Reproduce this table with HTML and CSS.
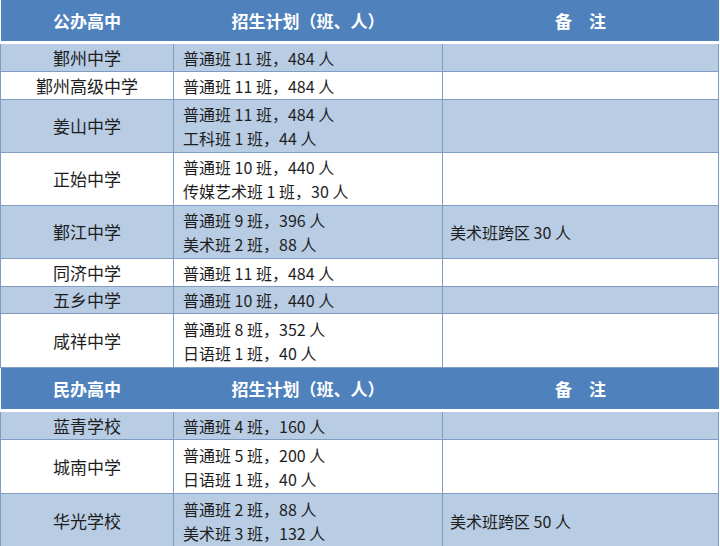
FILE: index.html
```html
<!DOCTYPE html>
<html lang="zh">
<head>
<meta charset="utf-8">
<link rel="stylesheet" href="styles.css">
</head>
<body>
<table class="plan">
  <colgroup>
    <col class="c1"><col class="c2"><col class="c3">
  </colgroup>
  <tbody>
    <tr class="head">
      <th>公办高中</th><th>招生计划（班、人）</th><th>备&#12288;注</th>
    </tr>
    <tr class="r1 alt"><td class="name">鄞州中学</td><td class="plan-c">普通班 11 班，484 人</td><td class="note"></td></tr>
    <tr class="r1"><td class="name">鄞州高级中学</td><td class="plan-c">普通班 11 班，484 人</td><td class="note"></td></tr>
    <tr class="r2 alt"><td class="name">姜山中学</td><td class="plan-c">普通班 11 班，484 人<br>工科班 1 班，44 人</td><td class="note"></td></tr>
    <tr class="r2"><td class="name">正始中学</td><td class="plan-c">普通班 10 班，440 人<br>传媒艺术班 1 班，30 人</td><td class="note"></td></tr>
    <tr class="r2 alt"><td class="name">鄞江中学</td><td class="plan-c">普通班 9 班，396 人<br>美术班 2 班，88 人</td><td class="note">美术班跨区 30 人</td></tr>
    <tr class="r1"><td class="name">同济中学</td><td class="plan-c">普通班 11 班，484 人</td><td class="note"></td></tr>
    <tr class="r1b alt"><td class="name">五乡中学</td><td class="plan-c">普通班 10 班，440 人</td><td class="note"></td></tr>
    <tr class="r2b"><td class="name">咸祥中学</td><td class="plan-c">普通班 8 班，352 人<br>日语班 1 班，40 人</td><td class="note"></td></tr>
    <tr class="head">
      <th>民办高中</th><th>招生计划（班、人）</th><th>备&#12288;注</th>
    </tr>
    <tr class="r1 alt"><td class="name">蓝青学校</td><td class="plan-c">普通班 4 班，160 人</td><td class="note"></td></tr>
    <tr class="r2b"><td class="name">城南中学</td><td class="plan-c">普通班 5 班，200 人<br>日语班 1 班，40 人</td><td class="note"></td></tr>
    <tr class="r2b alt"><td class="name">华光学校</td><td class="plan-c">普通班 2 班，88 人<br>美术班 3 班，132 人</td><td class="note">美术班跨区 50 人</td></tr>
  </tbody>
</table>
</body>
</html>
```

FILE: styles.css
```css
html, body {
  margin: 0;
  padding: 0;
  background: #ffffff;
}

.plan {
  border-collapse: collapse;
  table-layout: fixed;
  width: 718px;
  font-family: "Noto Sans CJK SC", "Noto Sans", sans-serif;
  color: #1e1e1e;
}

.c1 { width: 173px; }
.c2 { width: 269px; }
.c3 { width: 276px; }

.head th {
  height: 41px;
  padding: 0;
  background: #4f81bd;
  color: #ffffff;
  font-size: 17px;
  font-weight: bold;
  text-align: center;
  border-bottom: 3px solid #ffffff;
  border-left: none;
  border-right: none;
}

.plan td {
  padding: 0;
  background: #ffffff;
  border: 1px solid #7f9cc4;
  vertical-align: middle;
}

.plan tr.alt td {
  background: #b8cce4;
}

.r1 td { height: 27px; }
.r1b td { height: 26px; }
.r2 td { height: 52px; }
.r2b td { height: 53px; }

.name {
  text-align: center;
  font-size: 17px;
  line-height: 24px;
}

.plan-c {
  font-size: 16px;
  line-height: 24px;
  padding-left: 9px !important;
}

.note {
  font-size: 16px;
  line-height: 24px;
  padding-left: 7px !important;
}
```
